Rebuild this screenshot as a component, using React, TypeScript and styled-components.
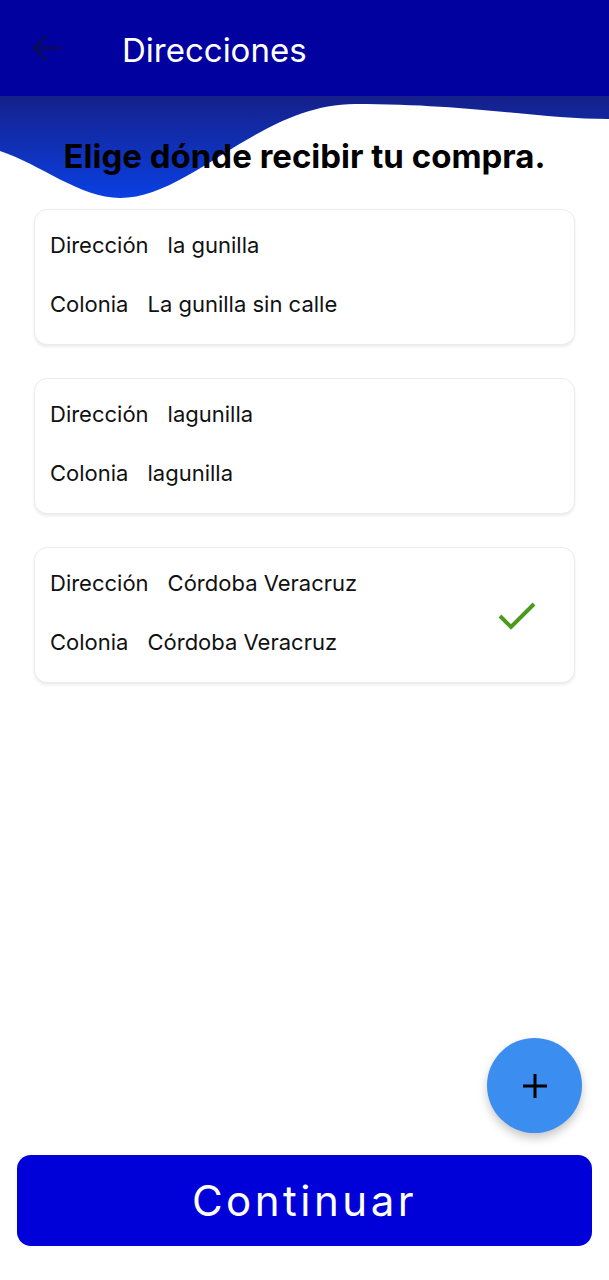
import React from "react";
import styled, { createGlobalStyle } from "styled-components";

const GlobalStyle = createGlobalStyle`
  html, body {
    margin: 0;
    padding: 0;
    background: #fff;
  }
  body {
    font-family: "Inter", "Roboto", sans-serif;
    color: #111;
  }
`;

const Page = styled.div`
  min-height: 100vh;
  display: flex;
  flex-direction: column;
`;

const Header = styled.header`
  height: 96px;
  background: #0101a0;
  display: flex;
  align-items: center;
  padding: 0 0 0 31px;
  box-sizing: border-box;
  gap: 30px;
`;

const BackButton = styled.button`
  width: 32px;
  height: 32px;
  padding: 0;
  border: 0;
  background: transparent;
  display: flex;
  align-items: center;
  justify-content: center;
`;

const Title = styled.h1`
  margin: 3px 0 0 29px;
  font-size: 33px;
  font-weight: normal;
  color: #fff;
`;

const Hero = styled.section`
  position: relative;
  padding: 40px 0 33px;
`;

const Wave = styled.svg`
  position: absolute;
  top: 0;
  left: 0;
  width: 100%;
  height: 104px;
  z-index: 0;
`;

const Heading = styled.h2`
  position: relative;
  z-index: 1;
  margin: 0;
  text-align: center;
  font-size: 33px;
  line-height: 40px;
  font-weight: bold;
  color: #000;
`;

const List = styled.div`
  display: flex;
  flex-direction: column;
  gap: 33px;
  padding: 0 34px;
`;

const Card = styled.div`
  display: flex;
  align-items: center;
  padding: 21px 17px 26px 15px;
  border-radius: 13px;
  border: 1px solid #ececec;
  box-shadow: 0 2px 3px rgba(0, 0, 0, 0.08);
  background: #fff;
`;

const Fields = styled.div`
  flex: 1;
  display: flex;
  flex-direction: column;
  gap: 31px;
`;

const Row = styled.div`
  display: flex;
  gap: 19px;
  font-size: 22px;
  line-height: 28px;
  color: #111;
`;

const Check = styled.svg`
  width: 40px;
  height: 32px;
  margin-right: 20px;
  margin-top: 4px;
`;

const Spacer = styled.div`
  flex: 1;
`;

const FabRow = styled.div`
  display: flex;
  justify-content: flex-end;
  padding: 0 27px 22px 0;
`;

const Fab = styled.button`
  width: 95px;
  height: 95px;
  border-radius: 50%;
  border: 0;
  background: #3b8ef0;
  display: flex;
  align-items: center;
  justify-content: center;
  box-shadow: 0 5px 10px rgba(0, 0, 0, 0.22);
`;

const Footer = styled.div`
  padding: 0 17px 34px;
`;

const ContinueButton = styled.button`
  width: 100%;
  height: 91px;
  border: 0;
  border-radius: 14px;
  background: #0000d8;
  color: #fff;
  font-family: "Inter", "Roboto", sans-serif;
  font-size: 42px;
  letter-spacing: 3.5px;
`;

const addresses = [
  { direccion: "la gunilla", colonia: "La gunilla sin calle", selected: false },
  { direccion: "lagunilla", colonia: "lagunilla", selected: false },
  { direccion: "Córdoba Veracruz", colonia: "Córdoba Veracruz", selected: true },
];

export default function App() {
  return (
    <>
      <GlobalStyle />
      <Page>
        <Header>
          <BackButton aria-label="Atrás">
            <svg width="30" height="26" viewBox="0 0 30 26">
              <path
                d="M28 13H3M13 2L2 13l11 11"
                fill="none"
                stroke="#0b0b5e"
                strokeWidth="3"
                strokeLinecap="round"
                strokeLinejoin="round"
              />
            </svg>
          </BackButton>
          <Title>Direcciones</Title>
        </Header>

        <Hero>
          <Wave viewBox="0 0 609 104" preserveAspectRatio="none">
            <defs>
              <linearGradient id="waveFill" x1="0" y1="0" x2="0" y2="1">
                <stop offset="0" stopColor="#15208a" />
                <stop offset="1" stopColor="#0a40e2" />
              </linearGradient>
            </defs>
            <path
              d="M0 0H609V23C540 23 470 8 355 8C260 8 190 102 120 102C80 102 40 68 0 55Z"
              fill="url(#waveFill)"
            />
          </Wave>
          <Heading>Elige dónde recibir tu compra.</Heading>
        </Hero>

        <List>
          {addresses.map((a, i) => (
            <Card key={i}>
              <Fields>
                <Row>
                  <span>Dirección</span>
                  <span>{a.direccion}</span>
                </Row>
                <Row>
                  <span>Colonia</span>
                  <span>{a.colonia}</span>
                </Row>
              </Fields>
              {a.selected && (
                <Check viewBox="0 0 40 32">
                  <path
                    d="M3 17L14 28L37 5"
                    fill="none"
                    stroke="#4b9a1d"
                    strokeWidth="4"
                  />
                </Check>
              )}
            </Card>
          ))}
        </List>

        <Spacer />

        <FabRow>
          <Fab aria-label="Agregar dirección">
            <svg width="26" height="26" viewBox="0 0 26 26">
              <path d="M13 1V25M1 13H25" stroke="#000" strokeWidth="3" />
            </svg>
          </Fab>
        </FabRow>

        <Footer>
          <ContinueButton>Continuar</ContinueButton>
        </Footer>
      </Page>
    </>
  );
}
